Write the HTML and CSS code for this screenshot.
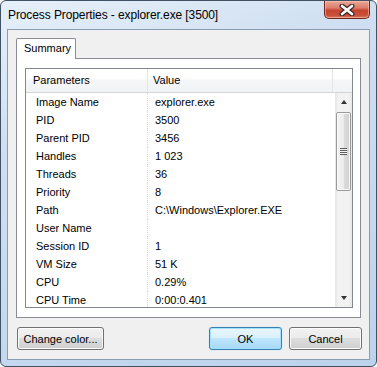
FILE: index.html
```html
<!DOCTYPE html>
<html lang="en">
    <head>
        <meta charset="utf-8">
        <title>Process Properties</title>
        <link rel="stylesheet" href="styles.css">
    </head>
    <body>
        <div class="window">
            <div class="titlebar">
                <span class="title">Process Properties - explorer.exe [3500]</span>
                <div class="close">
                    <svg width="16" height="12" viewBox="0 0 16 12">
                        <path d="M3 2 L13 10 M13 2 L3 10" stroke="#3b2a2a" stroke-width="5" stroke-linecap="round"/>
                        <path d="M3 2 L13 10 M13 2 L3 10" stroke="#ffffff" stroke-width="2.6" stroke-linecap="round"/>
                    </svg>
                </div>
            </div>
            <div class="client">
                <div class="tabs">
                    <div class="tab">Summary</div>
                </div>
                <div class="panel">
                    <div class="list">
                        <div class="header">
                            <div class="hcol param">Parameters</div>
                            <div class="hcol value">Value</div>
                            <div class="hcol filler"></div>
                        </div>
                        <div class="body">
                            <div class="rows">
                                <div class="row"><span class="param">Image Name</span><span class="value">explorer.exe</span></div>
                                <div class="row"><span class="param">PID</span><span class="value">3500</span></div>
                                <div class="row"><span class="param">Parent PID</span><span class="value">3456</span></div>
                                <div class="row"><span class="param">Handles</span><span class="value">1 023</span></div>
                                <div class="row"><span class="param">Threads</span><span class="value">36</span></div>
                                <div class="row"><span class="param">Priority</span><span class="value">8</span></div>
                                <div class="row"><span class="param">Path</span><span class="value">C:\Windows\Explorer.EXE</span></div>
                                <div class="row"><span class="param">User Name</span><span class="value"></span></div>
                                <div class="row"><span class="param">Session ID</span><span class="value">1</span></div>
                                <div class="row"><span class="param">VM Size</span><span class="value">51 K</span></div>
                                <div class="row"><span class="param">CPU</span><span class="value">0.29%</span></div>
                                <div class="row"><span class="param">CPU Time</span><span class="value">0:00:0.401</span></div>
                            </div>
                            <div class="scrollbar">
                                <div class="arrow"><span class="tri up"></span></div>
                                <div class="track">
                                    <div class="thumb"><span class="grip"></span></div>
                                </div>
                                <div class="arrow"><span class="tri down"></span></div>
                            </div>
                        </div>
                    </div>
                </div>
                <div class="buttons">
                    <button class="btn wide">Change color...</button>
                    <span class="spacer"></span>
                    <button class="btn default">OK</button>
                    <button class="btn">Cancel</button>
                </div>
            </div>
        </div>
    </body>
</html>
```

FILE: styles.css
```css
html, body {
    margin: 0;
    padding: 0;
    background: #ffffff;
}
.window {
    width: 377px;
    height: 367px;
    box-sizing: border-box;
    border: 1px solid #405264;
    border-radius: 6px;
    overflow: hidden;
    display: flex;
    flex-direction: column;
    background: linear-gradient(160deg, #e6f0fa 0%, #cfdff1 30%, #bcd3ec 100%);
    font-family: "Liberation Sans", Arial, sans-serif;
    font-size: 11px;
    color: #000;
}
.titlebar {
    height: 28px;
    display: flex;
    align-items: flex-start;
    flex-shrink: 0;
}
.title {
    margin: 7px 0 0 7px;
    font-size: 12px;
    letter-spacing: -0.1px;
    line-height: 15px;
    color: #000;
}
.close {
    margin-left: auto;
    margin-right: 6px;
    width: 46px;
    height: 18px;
    box-sizing: border-box;
    border: 1px solid #6e2a22;
    border-top: none;
    border-radius: 0 0 5px 5px;
    background: linear-gradient(#e9a896 0%, #dc7e6c 40%, #c8432f 55%, #c9513a 85%, #d77c5d 100%);
    box-shadow: inset 0 0 0 1px rgba(255, 210, 200, 0.5);
    display: flex;
    align-items: center;
    justify-content: center;
}
.client {
    flex: 1;
    margin: 0 6px 6px 6px;
    border: 1px solid #8a9cb0;
    background: #f0f0f0;
    padding: 8px 8px 9px 8px;
    display: flex;
    flex-direction: column;
}
.tabs {
    display: flex;
    height: 20px;
}
.tab {
    position: relative;
    z-index: 1;
    width: 60px;
    height: 21px;
    box-sizing: border-box;
    border: 1px solid #898c95;
    border-bottom: none;
    border-radius: 2px 2px 0 0;
    background: #ffffff;
    padding-left: 7px;
    line-height: 19px;
}
.panel {
    height: 260px;
    box-sizing: border-box;
    border: 1px solid #898c95;
    background: #ffffff;
    padding: 9px 7px 9px 8px;
}
.list {
    height: 240px;
    box-sizing: border-box;
    border: 1px solid #828790;
    display: flex;
    flex-direction: column;
    overflow: hidden;
}
.header {
    display: flex;
    height: 24px;
    box-sizing: border-box;
    border-bottom: 1px solid #d5d5d5;
    background: linear-gradient(#ffffff 0%, #ffffff 45%, #f6f7f8 46%, #f1f2f4 100%);
    flex-shrink: 0;
}
.hcol {
    box-sizing: border-box;
    border-right: 1px solid #e3e5e8;
    line-height: 23px;
}
.hcol.param {
    width: 122px;
    padding-left: 7px;
}
.hcol.value {
    width: 185px;
    padding-left: 5px;
}
.hcol.filler {
    flex: 1;
    border-right: none;
}
.body {
    flex: 1;
    display: flex;
    overflow: hidden;
}
.rows {
    flex: 1;
}
.row {
    display: flex;
    height: 18px;
    line-height: 18px;
}
.row .param {
    width: 122px;
    box-sizing: border-box;
    padding-left: 10px;
    border-right: 1px dotted #d9d9d9;
}
.row .value {
    padding-left: 7px;
    white-space: nowrap;
}
.scrollbar {
    width: 17px;
    display: flex;
    flex-direction: column;
    background: linear-gradient(90deg, #e6e6e6 0%, #f2f2f2 20%, #f2f2f2 80%, #e8e8e8 100%);
}
.arrow {
    height: 18px;
    display: flex;
    align-items: center;
    justify-content: center;
}
.tri {
    width: 0;
    height: 0;
    border-left: 3.5px solid transparent;
    border-right: 3.5px solid transparent;
}
.tri.up {
    border-bottom: 4px solid #303030;
}
.tri.down {
    border-top: 4px solid #303030;
}
.track {
    flex: 1;
    padding: 1px 1px 0 1px;
}
.thumb {
    height: 79px;
    box-sizing: border-box;
    border: 1px solid #9a9a9a;
    border-radius: 2px;
    background: linear-gradient(90deg, #f4f4f4 0%, #ececec 50%, #dcdcdc 51%, #d2d2d2 100%);
    box-shadow: inset 0 0 0 1px #fafafa;
    display: flex;
    align-items: center;
    justify-content: center;
}
.grip {
    width: 7px;
    height: 7px;
    background: repeating-linear-gradient(#5d5d5d 0px, #5d5d5d 1px, #f6f6f6 1px, #f6f6f6 2px);
}
.buttons {
    display: flex;
    margin: 9px -1px 0 1px;
    gap: 7px;
}
.spacer {
    flex: 1;
}
.btn {
    width: 73px;
    height: 23px;
    box-sizing: border-box;
    border: 1px solid #707070;
    border-radius: 3px;
    background: linear-gradient(#f2f2f2 0%, #ebebeb 48%, #dddddd 50%, #cfcfcf 100%);
    box-shadow: inset 0 0 0 1px #fcfcfc;
    font-family: "Liberation Sans", Arial, sans-serif;
    font-size: 11px;
    color: #000;
    padding: 0;
}
.btn.wide {
    width: 87px;
}
.btn.default {
    border-color: #3c7fb1;
    background: linear-gradient(#eaf6fd 0%, #d9f0fc 48%, #bee6fd 50%, #a7d9f5 100%);
    box-shadow: inset 0 0 0 1px #9fe1ff, 0 0 1px #6fc9f1;
}
```
